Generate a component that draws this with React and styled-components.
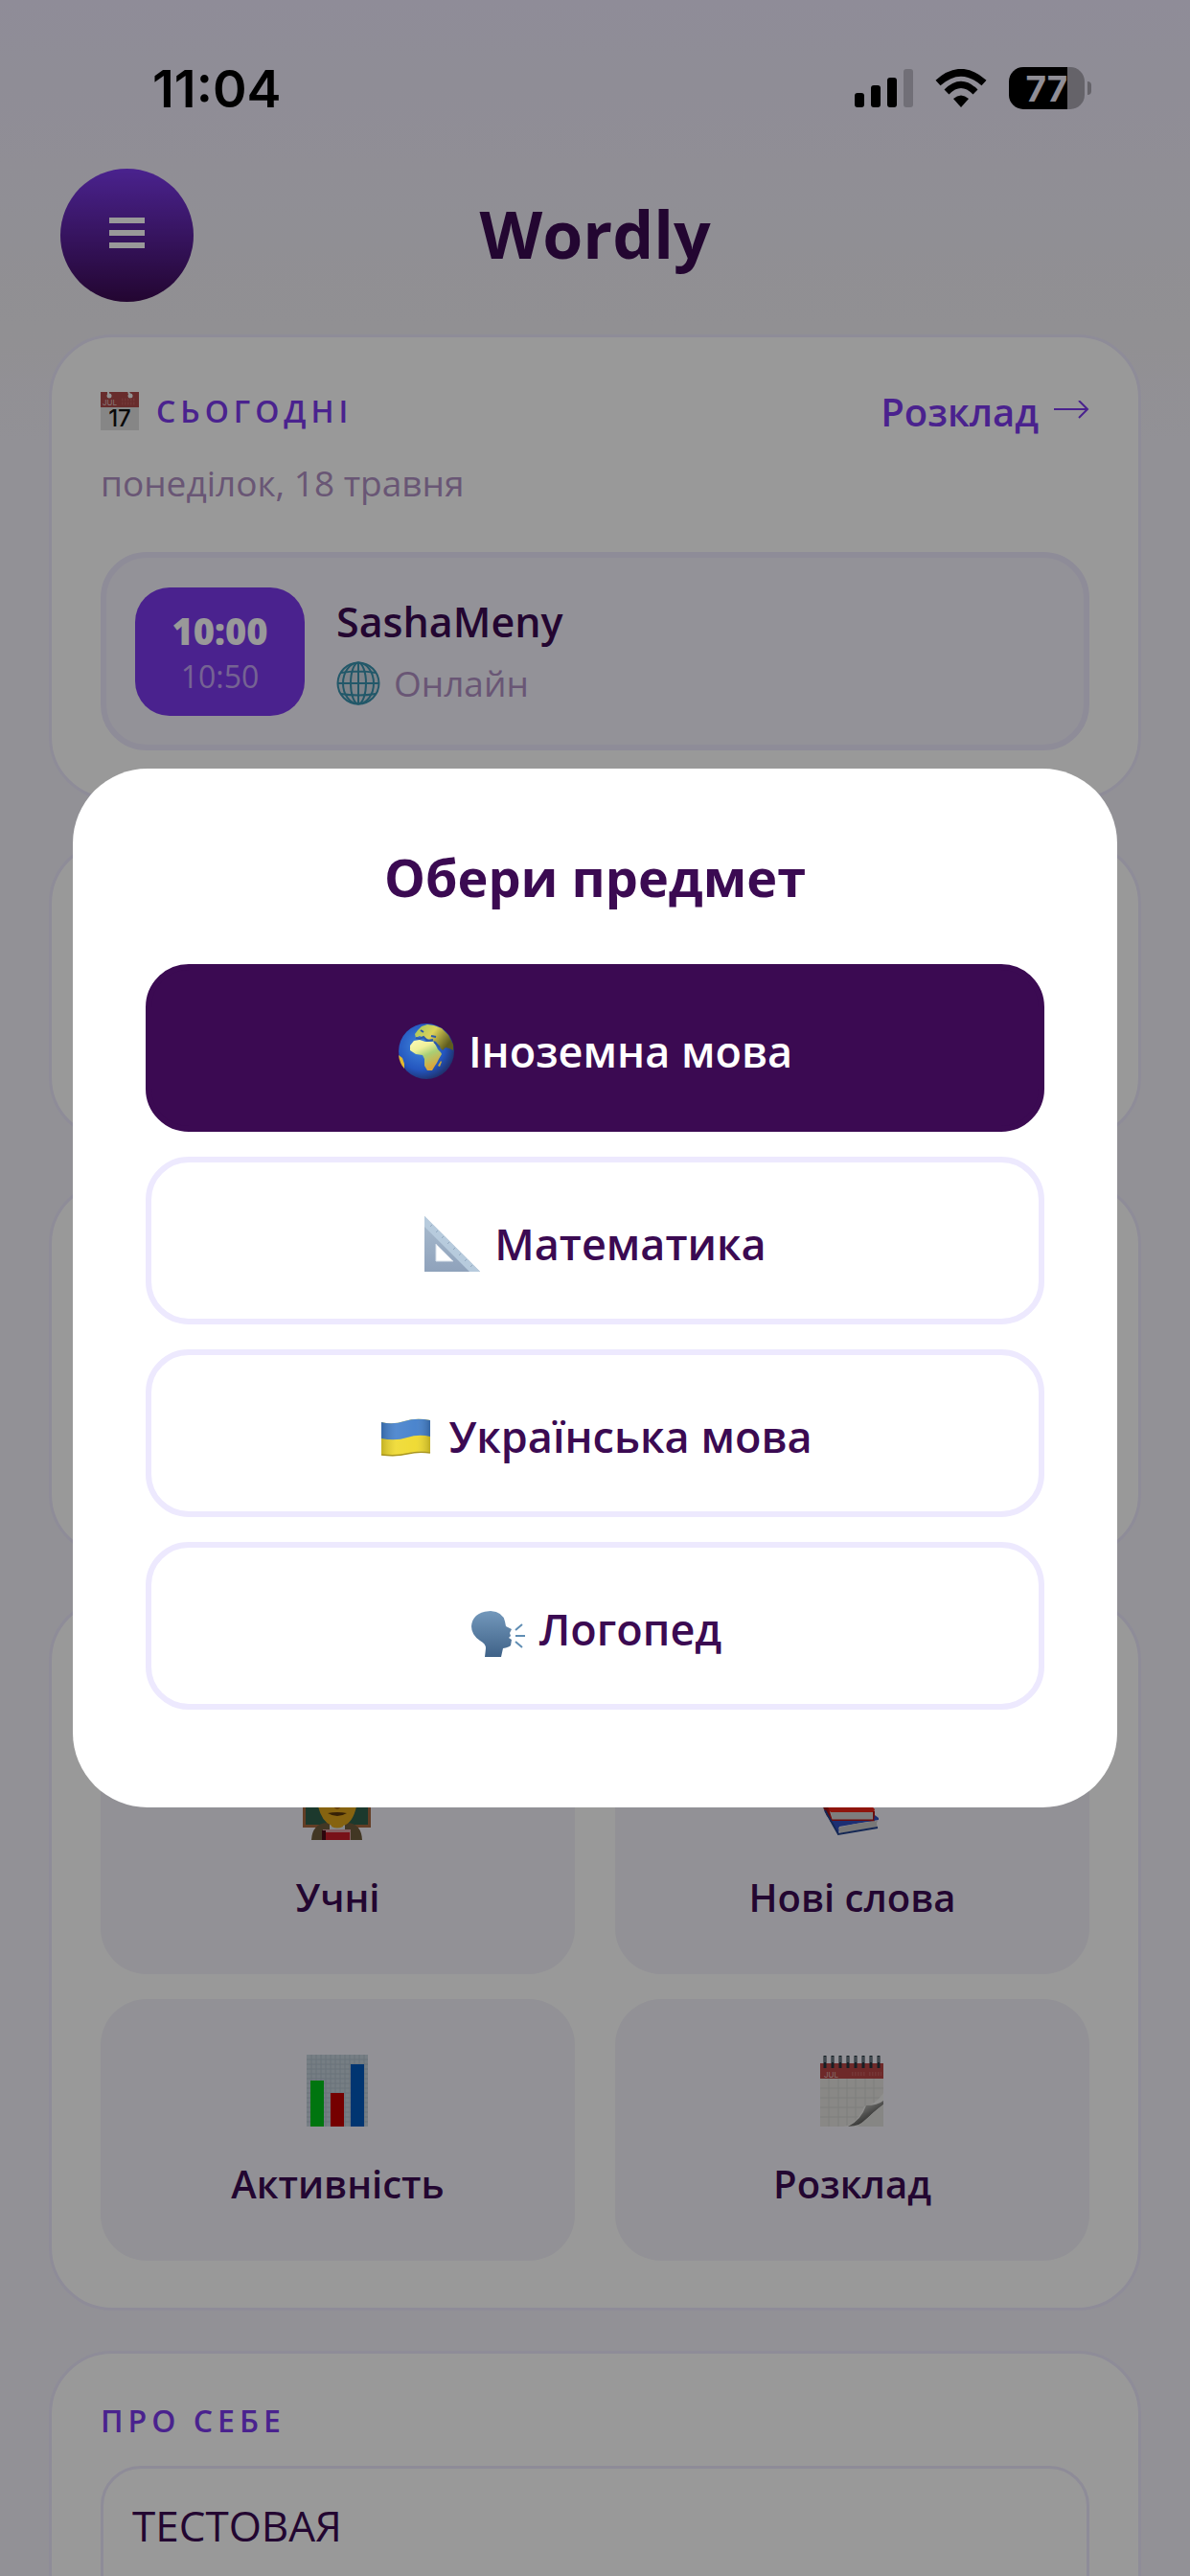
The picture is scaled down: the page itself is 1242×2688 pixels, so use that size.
import React, { Component } from 'react'
import styled, { createGlobalStyle } from 'styled-components';

const GlobalStyle = createGlobalStyle`
    * {
        box-sizing: border-box;
    }
    body {
        margin: 0;
        background: #f3f2fa;
        color: #3b0a52;
        font-family: "Open Sans", "Noto Sans", sans-serif;
    }
    button, textarea {
        font-family: inherit;
        color: inherit;
    }
`
const Screen = styled.div`
    height: 100vh;
    overflow: hidden;
    background: linear-gradient(#eeeafd, #f2f0f5 340px, #f3f2fa 460px);
`
const StatusBar = styled.div`
    display: flex;
    justify-content: space-between;
    align-items: center;
    height: 176px;
    padding: 8px 103px 0 159px;
`
const Time = styled.div`
    font-family: Inter, sans-serif;
    font-size: 54px;
    font-weight: 600;
    color: #000;
`
const StatusIcons = styled.div`
    display: flex;
    align-items: center;
    gap: 23px;
`
const Battery = styled.div`
    display: flex;
    align-items: center;
    gap: 3px;
`
const BatteryLevel = styled.div`
    display: flex;
    align-items: center;
    justify-content: center;
    width: 79px;
    height: 44px;
    border-radius: 15px;
    background: linear-gradient(90deg, #000 77%, #a8a5b0 77%);
    color: #f0edfb;
    font-family: Inter, sans-serif;
    font-size: 37px;
    font-weight: 700;
`
const BatteryTip = styled.div`
    width: 4px;
    height: 14px;
    border-radius: 0 6px 6px 0;
    background: #a8a5b0;
`
const Header = styled.header`
    display: grid;
    grid-template-columns: 139px 1fr 139px;
    align-items: center;
    height: 139px;
    padding: 0 63px;
`
const MenuButton = styled.button`
    display: flex;
    align-items: center;
    justify-content: center;
    width: 139px;
    height: 139px;
    padding: 0;
    border: 0;
    border-radius: 50%;
    background: linear-gradient(#7c3aed, #3b0a52);
`
const Logo = styled.h1`
    margin: 0;
    padding-bottom: 4px;
    text-align: center;
    font-size: 68px;
    font-weight: 700;
    line-height: 90px;
`
const Content = styled.main`
    display: flex;
    flex-direction: column;
    gap: 42px;
    padding: 34px 51px;
`
const Card = styled.section`
    display: flex;
    flex-direction: column;
    justify-content: ${props => props.$end ? 'flex-end' : 'flex-start'};
    flex-shrink: 0;
    min-height: ${props => props.$min || 0}px;
    padding: 49px 51px;
    border: 3px solid #ede9fe;
    border-radius: 66px;
    background: #fff;
`
const CardHead = styled.div`
    display: flex;
    justify-content: space-between;
    align-items: center;
    height: 56px;
`
const Heading = styled.h2`
    display: flex;
    align-items: center;
    gap: 18px;
    margin: 0;
    color: #7c3aed;
    font-size: 32px;
    font-weight: 600;
    line-height: 42px;
    letter-spacing: 5px;
`
const ScheduleLink = styled.a`
    display: flex;
    align-items: center;
    gap: 15px;
    color: #7c3aed;
    font-size: 40px;
    font-weight: 600;
    text-decoration: none;
`
const DateText = styled.p`
    margin: 20px 0 45px;
    color: #af8fc3;
    font-size: 37px;
    font-weight: 500;
    line-height: 54px;
`
const Lesson = styled.div`
    display: flex;
    align-items: center;
    gap: 33px;
    height: 207px;
    padding: 30px;
    border: 6px solid #ede9fe;
    border-radius: 48px;
    background: #f5f3fd;
`
const LessonTime = styled.div`
    display: flex;
    flex-direction: column;
    align-items: center;
    justify-content: center;
    width: 177px;
    height: 134px;
    border-radius: 36px;
    background: #7c3aed;
    color: #fff;
`
const Start = styled.div`
    font-size: 38px;
    font-weight: 800;
    line-height: 52px;
`
const End = styled.div`
    color: #c4a6f6;
    font-size: 32px;
    line-height: 44px;
`
const Student = styled.div`
    font-size: 43px;
    font-weight: 600;
    line-height: 58px;
`
const Place = styled.div`
    display: flex;
    align-items: center;
    gap: 14px;
    margin-top: 8px;
    color: #af8fc3;
    font-size: 37px;
    font-weight: 500;
    line-height: 54px;
`
const Tiles = styled.div`
    display: grid;
    grid-template-columns: 1fr 1fr;
    gap: 26px 42px;
`
const Tile = styled.button`
    display: flex;
    flex-direction: column;
    align-items: center;
    gap: 32px;
    height: 273px;
    padding: 56px 20px 0;
    border: 0;
    border-radius: 48px;
    background: #f3f2fa;
    font-size: 40px;
    font-weight: 600;
    line-height: 54px;
`
const AboutLabel = styled.label`
    color: #7c3aed;
    font-size: 32px;
    font-weight: 600;
    line-height: 42px;
    letter-spacing: 5px;
`
const AboutText = styled.textarea`
    height: 260px;
    margin-top: 26px;
    padding: 30px;
    border: 3px solid #ede9fe;
    border-radius: 42px;
    background: #fff;
    font-size: 44px;
    line-height: 58px;
    resize: none;
    outline: 0;
`
const Overlay = styled.div`
    position: fixed;
    inset: 0;
    display: flex;
    align-items: center;
    justify-content: center;
    padding: 0 76px;
    background: rgba(0, 0, 0, 0.4);
`
const Modal = styled.div`
    width: 100%;
    padding: 76px 76px 102px;
    border-radius: 78px;
    background: #fff;
`
const ModalTitle = styled.h2`
    margin: 0 0 54px;
    text-align: center;
    font-size: 54px;
    font-weight: 700;
    line-height: 74px;
`
const Subjects = styled.div`
    display: flex;
    flex-direction: column;
    gap: 26px;
`
const SubjectButton = styled.button`
    display: flex;
    align-items: center;
    justify-content: center;
    gap: 14px;
    height: 175px;
    padding: 6px 30px 0;
    border: 6px solid ${props => props.$active ? '#3b0a52' : '#ede9fe'};
    border-radius: 45px;
    background: ${props => props.$active ? '#3b0a52' : '#fff'};
    color: ${props => props.$active ? '#fff' : '#3b0a52'};
    font-size: 45px;
    font-weight: 600;
    line-height: 66px;
`

const Signal = () => (
    <svg width="61" height="40" viewBox="0 0 61 40">
        <rect x="0" y="25" width="10" height="15" rx="3" />
        <rect x="17" y="17" width="10" height="23" rx="3" />
        <rect x="34" y="9" width="10" height="31" rx="3" />
        <rect x="51" y="0" width="10" height="40" rx="3" fill="#bcb9c6" />
    </svg>
)

const Wifi = () => (
    <svg width="54" height="40" viewBox="0 0 54 40">
        <path d="M27 40 L19 31 Q27 24 35 31Z" />
        <path d="M12 24 Q27 9 42 24" fill="none" stroke="#000" strokeWidth="7" />
        <path d="M3 14.500 Q27 -7 51 14.500" fill="none" stroke="#000" strokeWidth="7.500" />
    </svg>
)

const MenuLines = () => (
    <svg width="37" height="38" viewBox="0 0 37 38" fill="#fff">
        <rect y="0" width="37" height="6" />
        <rect y="13" width="37" height="6" />
        <rect y="26" width="37" height="6" />
    </svg>
)

const Arrow = () => (
    <svg width="38" height="22" viewBox="0 0 38 22" fill="none" stroke="#7c3aed" strokeWidth="2">
        <path d="M1 9H36M27 0L36 9L27 18" />
    </svg>
)

const DayIcon = () => (
    <svg width="40" height="40" viewBox="0 0 40 40" overflow="visible" fontFamily="Inter" fontWeight="400" letterSpacing="0">
        <rect width="40" height="40" fill="#e0e0e0" />
        <rect width="40" height="16" fill="#ad4a4a" />
        <circle cx="9" cy="4" r="2.500" fill="#f4f4f4" />
        <circle cx="31" cy="4" r="2.500" fill="#f4f4f4" />
        <path d="M8 0v4M29 0l2 4" stroke="#f4f4f4" strokeWidth="2" />
        <path d="M22 8h15M22 12h15" stroke="#bd5c5c" strokeWidth="3" strokeDasharray="1.500 1.500" />
        <text x="2" y="14" fontSize="8" fill="#e0c4c4">JUL</text>
        <text x="20" y="36" textAnchor="middle" fontSize="24" fontWeight="500" fill="#111">17</text>
    </svg>
)

const Globe = () => (
    <svg width="46" height="46" viewBox="0 0 46 46" fill="none" stroke="#3a93b0" strokeWidth="2">
        <circle cx="23" cy="23" r="21.500" fill="#d3dde6" />
        <ellipse cx="23" cy="23" rx="16" ry="21.500" />
        <ellipse cx="23" cy="23" rx="8" ry="21.500" />
        <path d="M23 1V45M1 23H45M5 12Q23 9 41 12M5 34Q23 37 41 34" />
    </svg>
)

const Earth = () => (
    <svg width="60" height="60" viewBox="0 0 60 60">
        <defs>
            <radialGradient id="sea" cx="0.4" cy="0.4" r="0.62">
                <stop offset="0" stopColor="#3f86dc" />
                <stop offset="0.7" stopColor="#2456bf" />
                <stop offset="1" stopColor="#1f3473" />
            </radialGradient>
            <linearGradient id="land" x1="0" y1="0" x2="0.5" y2="1">
                <stop offset="0" stopColor="#fbfbb8" />
                <stop offset="0.35" stopColor="#eef09a" />
                <stop offset="0.6" stopColor="#a9cf76" />
                <stop offset="1" stopColor="#dba53a" />
            </linearGradient>
            <linearGradient id="europe" x1="0" y1="0" x2="1" y2="0.5">
                <stop offset="0" stopColor="#9fc65f" />
                <stop offset="0.5" stopColor="#dcd25a" />
                <stop offset="1" stopColor="#5f5c1e" />
            </linearGradient>
        </defs>
        <circle cx="30" cy="30" r="29" fill="url(#sea)" />
        <path d="M18 12L21 8L25 4L31 2L38 3L46 6L53 13L58 23V29L54 27L50 26L47 29L43 25L40 20L35 19L31 17L27 16L23 14L19 16Z" fill="url(#europe)" />
        <path d="M13 24L17 19L23 18L29 20L38 20L42 28L45 31L46 33L43 38L41 42L39 45L36 50H31L28 45V38L26 34L19 33L13 29Z" fill="url(#land)" />
        <path d="M42 45L45 40L46 41L44 46Z" fill="#c9a63c" />
        <path d="M1 34L5 37L7 43V48Q2 43 1 34Z" fill="#e1b92f" />
        <path d="M19 16L23 17L27 15L31 19L37 18M35 14L40 15M24 8L27 10M38 20L44 26" fill="none" stroke="#2d5aa8" strokeWidth="2" />
    </svg>
)

const Triangle = () => (
    <svg width="60" height="60" viewBox="0 0 60 60">
        <defs>
            <linearGradient id="ruler" x1="0" y1="0" x2="0" y2="1">
                <stop offset="0" stopColor="#a9bccf" />
                <stop offset="1" stopColor="#8fa2bb" />
            </linearGradient>
        </defs>
        <path d="M1 1V59H59ZM13 30L31 48H13Z" fill="url(#ruler)" fillRule="evenodd" />
        <path d="M1 1L59 59H48L1 12Z" fill="#b7cbdd" />
        <path d="M7 12l2-2M13 18l2-2M19 24l2-2M25 30l2-2M31 36l2-2M37 42l2-2M43 48l2-2M49 54l2-2" stroke="#94aac1" strokeWidth="1" />
        <path d="M13 30V48H31" fill="none" stroke="#d7e0ea" strokeWidth="1" />
    </svg>
)

const Flag = () => (
    <svg width="60" height="60" viewBox="0 0 60 60">
        <defs>
            <linearGradient id="wave" x1="0" y1="0" x2="1" y2="0">
                <stop offset="0" stopColor="#000" stopOpacity="0.18" />
                <stop offset="0.3" stopColor="#fff" stopOpacity="0.1" />
                <stop offset="0.7" stopColor="#fff" stopOpacity="0.05" />
                <stop offset="1" stopColor="#000" stopOpacity="0.2" />
            </linearGradient>
        </defs>
        <path d="M4 15Q16 18 28 14T55 13V47Q43 44 31 48T4 49Z" fill="#efd92b" />
        <path d="M4 15Q16 18 28 14T55 13V30Q43 27 31 31T4 32Z" fill="#427fcb" />
        <path d="M4 15Q16 18 28 14T55 13V47Q43 44 31 48T4 49Z" fill="url(#wave)" />
        <path d="M4 49Q19 51 31 48T55 47" fill="none" stroke="#a9961f" strokeWidth="1.500" />
    </svg>
)

const Speaking = () => (
    <svg width="60" height="60" viewBox="0 0 60 60">
        <defs>
            <linearGradient id="head" x1="0" y1="0" x2="0" y2="1">
                <stop offset="0" stopColor="#7398bb" />
                <stop offset="1" stopColor="#3f6288" />
            </linearGradient>
        </defs>
        <path d="M17 59L18 50Q18 45 12 42Q3 36 3 27Q4 12 23 11Q36 12 38 22L39 27L45 30L43 34L44 37L42 39L45 41L44 47Q42 49 36 50L34 59Z" fill="url(#head)" />
        <path d="M49 31L56 25M49 37H59M49 43L56 49" stroke="#5f8db3" strokeWidth="2" />
    </svg>
)

const Teacher = () => (
    <svg width="78" height="78" viewBox="0 0 78 78">
        <rect x="2" y="8" width="71" height="56" fill="#a5683f" />
        <rect x="5" y="11" width="65" height="50" fill="#2f5f4c" />
        <path d="M11 77Q12 60 27 59H49Q63 60 64 77Z" fill="#6f5c3c" />
        <path d="M30 58H46V68H30Z" fill="#dfe3ea" />
        <path d="M18 30Q18 12 38 12T58 30V42Q54 60 44 62V63Q38 66 32 63V62Q22 58 18 42Z" fill="#e0a51c" />
        <path d="M17 36Q14 6 38 7T59 36Q54 22 38 22T17 36Z" fill="#5b3518" />
        <path d="M28 49Q38 47 48 49Q38 55 28 49Z" fill="#5b380b" />
        <path d="M35 42q3 4 6 0" fill="none" stroke="#a8660f" strokeWidth="2" />
        <rect x="23" y="66" width="29" height="11" fill="#dca0a5" />
        <rect x="26" y="69" width="25" height="8" fill="#c81d28" />
        <rect x="22" y="67" width="4" height="10" fill="#4a0a16" />
    </svg>
)

const Books = () => (
    <svg width="78" height="78" viewBox="0 0 78 78">
        <path d="M12 8L52 4L62 20L22 26Z" fill="#2f9a4a" />
        <path d="M12 8L22 26V34L12 20Z" fill="#1c6b31" />
        <path d="M22 26L62 20V28L24 34Z" fill="#eee" />
        <path d="M6 38L50 32L62 45L61 48H16Z" fill="#ee2417" />
        <path d="M6 38L13 42L17 56L12 52Z" fill="#9c1410" />
        <path d="M16 48H61V56H18Z" fill="#d2d0d0" />
        <path d="M15 56.500H62M13 44L17 57M61 47V56" fill="none" stroke="#b51515" strokeWidth="2" />
        <path d="M7 42L12 50L17 57L61 57L62 51L66 54V56L25 63L24 72Z" fill="#2f4fc0" />
        <path d="M24 64Q44 59 65 57Q63 60 65 63L26 70Z" fill="#c9c9c9" />
        <path d="M10 46L24 71L65 64" fill="none" stroke="#22418c" strokeWidth="2" />
    </svg>
)

const Chart = () => (
    <svg width="78" height="78" viewBox="0 0 78 78">
        <rect x="6" y="2" width="64" height="75" fill="#c5d2dc" />
        <path d="M6 7H70M6 12H70M6 17H70M6 22H70M6 27H70M6 32H70M6 37H70M6 42H70M6 47H70M6 52H70M6 57H70M6 62H70M6 67H70M6 72H70M11 2V77M16 2V77M21 2V77M26 2V77M31 2V77M36 2V77M41 2V77M46 2V77M51 2V77M56 2V77M61 2V77M66 2V77" stroke="#b0bfcb" strokeWidth="1" />
        <rect x="10" y="29" width="14" height="48" fill="#00c41a" />
        <rect x="31" y="42" width="14" height="35" fill="#c40000" />
        <rect x="52" y="12" width="14" height="65" fill="#0059bd" />
    </svg>
)

const Calendar = () => (
    <svg width="78" height="78" viewBox="0 0 78 78">
        <defs>
            <linearGradient id="curl" x1="0.2" y1="0.2" x2="0.7" y2="0.8">
                <stop offset="0" stopColor="#d8d8d5" />
                <stop offset="0.6" stopColor="#7d7d7b" />
                <stop offset="1" stopColor="#4a4a48" />
            </linearGradient>
        </defs>
        <rect x="5" y="11" width="66" height="66" fill="#e4e3e0" />
        <rect x="5" y="11" width="66" height="16" fill="#b84545" />
        <text x="9" y="26" fontFamily="Inter" fontSize="8" fontWeight="400" fill="#ddb4b4">JUL</text>
        <path d="M38 22H53M56 22H69" stroke="#c45c5c" strokeWidth="4" strokeDasharray="1.500 1.500" />
        <path d="M5 37H71M5 47H71M5 57H71M5 67H71M14 27V77M24 27V77M33 27V77M42 27V77M52 27V77M61 27V77" stroke="#d2d1ce" strokeWidth="1" />
        <path d="M10 3V16M18 3V16M26 3V16M34 3V16M42 3V16M50 3V16M58 3V16M66 3V16" stroke="#26343f" strokeWidth="3" />
        <path d="M10 4V10M18 4V10M26 4V10M34 4V10M42 4V10M50 4V10M58 4V10M66 4V10" stroke="#a9bac5" strokeWidth="1" />
        <path d="M30 77Q44 74 51 56Q62 55 71 42V77Z" fill="#f1f0ee" />
        <path d="M34 77Q48 70 53 55Q65 55 71 50V54Q60 62 54 69Q48 76 34 77Z" fill="url(#curl)" />
        <path d="M44 77Q54 68 71 54V77Z" fill="#e0dfdc" />
    </svg>
)

const tiles = [
    { title: 'Учні', icon: <Teacher /> },
    { title: 'Нові слова', icon: <Books /> },
    { title: 'Активність', icon: <Chart /> },
    { title: 'Розклад', icon: <Calendar /> }
]

const subjects = [
    { id: 'foreign', title: 'Іноземна мова', icon: <Earth /> },
    { id: 'math', title: 'Математика', icon: <Triangle /> },
    { id: 'ukrainian', title: 'Українська мова', icon: <Flag /> },
    { id: 'speech', title: 'Логопед', icon: <Speaking /> }
]

class App extends Component {
    state = { subject: 'foreign' }

    render() {
        return (
            <Screen>
                <GlobalStyle />
                <StatusBar>
                    <Time>11:04</Time>
                    <StatusIcons>
                        <Signal />
                        <Wifi />
                        <Battery>
                            <BatteryLevel>77</BatteryLevel>
                            <BatteryTip />
                        </Battery>
                    </StatusIcons>
                </StatusBar>
                <Header>
                    <MenuButton aria-label="Меню"><MenuLines /></MenuButton>
                    <Logo>Wordly</Logo>
                </Header>
                <Content>
                    <Card>
                        <CardHead>
                            <Heading><DayIcon />СЬОГОДНІ</Heading>
                            <ScheduleLink href="#schedule">Розклад <Arrow /></ScheduleLink>
                        </CardHead>
                        <DateText>понеділок, 18 травня</DateText>
                        <Lesson>
                            <LessonTime>
                                <Start>10:00</Start>
                                <End>10:50</End>
                            </LessonTime>
                            <div>
                                <Student>SashaMeny</Student>
                                <Place><Globe />Онлайн</Place>
                            </div>
                        </Lesson>
                    </Card>
                    <Card $min={313} />
                    <Card $min={393} />
                    <Card $min={744} $end>
                        <Tiles>
                            {tiles.map(tile => (
                                <Tile key={tile.title}>
                                    {tile.icon}
                                    {tile.title}
                                </Tile>
                            ))}
                        </Tiles>
                    </Card>
                    <Card>
                        <AboutLabel htmlFor="about">ПРО СЕБЕ</AboutLabel>
                        <AboutText id="about" defaultValue="ТЕСТОВАЯ" />
                    </Card>
                </Content>
                <Overlay>
                    <Modal role="dialog" aria-labelledby="subject-title">
                        <ModalTitle id="subject-title">Обери предмет</ModalTitle>
                        <Subjects>
                            {subjects.map(subject => (
                                <SubjectButton
                                    key={subject.id}
                                    $active={subject.id === this.state.subject}
                                    onClick={() => this.setState({ subject: subject.id })}
                                >
                                    {subject.icon}
                                    {subject.title}
                                </SubjectButton>
                            ))}
                        </Subjects>
                    </Modal>
                </Overlay>
            </Screen>
        )
    }
}

export default App;
